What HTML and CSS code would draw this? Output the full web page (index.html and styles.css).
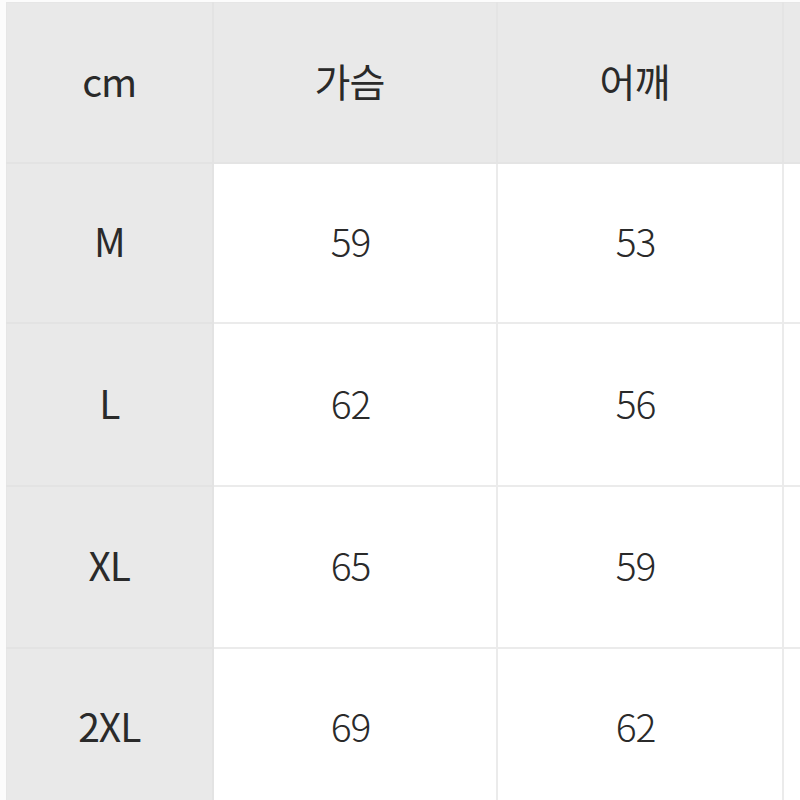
FILE: index.html
```html
<!DOCTYPE html>
<html lang="ko">
<head>
<meta charset="utf-8">
<title>사이즈 표</title>
<link rel="stylesheet" href="styles.css">
</head>
<body>
<div class="frame">
  <table class="size-table">
    <colgroup>
      <col class="c-label">
      <col class="c-a">
      <col class="c-b">
      <col class="c-c">
    </colgroup>
    <thead>
      <tr class="r-head">
        <th class="label">cm</th>
        <th>가슴</th>
        <th>어깨</th>
        <th></th>
      </tr>
    </thead>
    <tbody>
      <tr class="r1"><th class="label">M</th><td>59</td><td>53</td><td></td></tr>
      <tr class="r2"><th class="label">L</th><td>62</td><td>56</td><td></td></tr>
      <tr class="r3"><th class="label">XL</th><td>65</td><td>59</td><td></td></tr>
      <tr class="r4"><th class="label">2XL</th><td>69</td><td>62</td><td></td></tr>
    </tbody>
  </table>
</div>
</body>
</html>
```

FILE: styles.css
```css
html, body {
  margin: 0;
  padding: 0;
  background: #fcfcfc;
  overflow: hidden;
  width: 800px;
  height: 800px;
}

.frame {
  padding: 2px 0 0 6px;
}

.size-table {
  border-collapse: collapse;
  table-layout: fixed;
  width: 1062px;
  font-family: "Noto Sans CJK KR", "Noto Sans", sans-serif;
  color: #2a2a2a;
  border-top: 1px solid #e6e6e6;
  border-left: 1px solid #e6e6e6;
}

.c-label { width: 206px; }
.c-a { width: 284px; }
.c-b { width: 286px; }
.c-c { width: 286px; }

.size-table th,
.size-table td {
  padding: 0 0 5px 0;
  text-align: center;
  vertical-align: middle;
  border: 2px solid #ebebeb;
  font-size: 39px;
  font-weight: 300;
  letter-spacing: -1px;
  background: #ffffff;
}

.size-table thead th {
  background: #e9e9e9;
  border-color: #e4e4e4;
  border-top: none;
  font-weight: 400;
  padding-right: 10px;
}

.size-table thead th + th {
  border-left-color: #e9e9e9;
}

.size-table th.label {
  background: #e9e9e9;
  border-color: #e3e3e3;
  border-left: none;
  font-weight: 400;
  padding-right: 0;
}

.size-table td {
  padding-right: 8px;
}

.r-head { height: 160px; }
.r1 { height: 160px; }
.r2 { height: 163px; }
.r3 { height: 162px; }
.r4 { height: 160px; }
```
